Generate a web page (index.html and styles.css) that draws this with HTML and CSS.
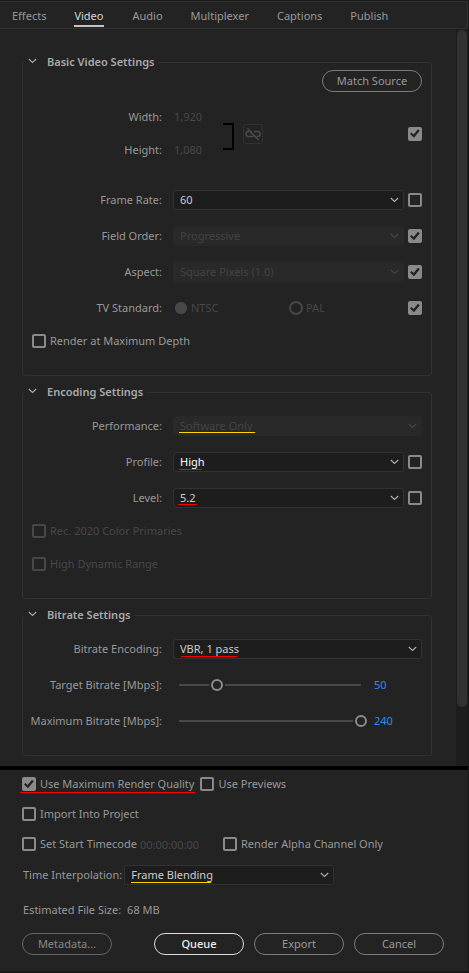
FILE: index.html
```html
<!DOCTYPE html>
<html lang="en">
<head>
<meta charset="utf-8">
<meta name="viewport" content="width=device-width, initial-scale=1">
<title>Export Settings</title>
<link rel="stylesheet" href="styles.css">
</head>
<body>
<svg class="defs" aria-hidden="true">
  <symbol id="chevron" viewBox="0 0 9 6"><path d="M.8 1 4.5 4.5 8.200 1" fill="none" stroke="currentColor" stroke-width="1.100"/></symbol>
</svg>
<main class="dialog">
  <nav class="tabs">
    <a href="#effects">Effects</a>
    <a href="#video" class="active" aria-current="page">Video</a>
    <a href="#audio">Audio</a>
    <a href="#multiplexer">Multiplexer</a>
    <a href="#captions">Captions</a>
    <a href="#publish">Publish</a>
  </nav>

  <div class="viewport">
    <form class="groups">
      <fieldset class="first">
        <legend><button type="button" class="fold" aria-label="Collapse"><svg><use href="#chevron"/></svg></button>Basic Video Settings</legend>
        <div class="actions"><button type="button" class="pill">Match Source</button></div>
        <div class="dims">
          <div class="sizes">
            <label for="w">Width:</label><input class="plain" id="w" type="text" value="1,920" disabled>
            <label for="h">Height:</label><input class="plain" id="h" type="text" value="1,080" disabled>
          </div>
          <span class="bracket"></span>
          <button type="button" class="link" aria-label="Link width and height" disabled>
            <svg viewBox="0 0 18 18"><path d="M5 6.500H4.500a2.500 2.500 0 0 0 0 5H8q1.500 0 2-1M8 6.500q-1.500.5-1.500 2M10 6.500h3.500a2.500 2.500 0 0 1 0 5H13M3.500 3.500l11 11.500" fill="none" stroke="currentColor" stroke-width="1.500"/></svg>
          </button>
          <input type="checkbox" aria-label="Match size" checked>
        </div>
        <div class="row">
          <label for="rate">Frame Rate:</label>
          <div class="select"><select id="rate"><option>60</option></select><svg><use href="#chevron"/></svg></div>
          <input type="checkbox" aria-label="Match frame rate">
        </div>
        <div class="row">
          <label for="order">Field Order:</label>
          <div class="select"><select id="order" disabled><option>Progressive</option></select><svg><use href="#chevron"/></svg></div>
          <input type="checkbox" aria-label="Match field order" checked>
        </div>
        <div class="row">
          <label for="aspect">Aspect:</label>
          <div class="select"><select id="aspect" disabled><option>Square Pixels (1.0)</option></select><svg><use href="#chevron"/></svg></div>
          <input type="checkbox" aria-label="Match aspect" checked>
        </div>
        <div class="row">
          <span class="label">TV Standard:</span>
          <div class="radios">
            <label><input type="radio" name="tv" checked disabled>NTSC</label>
            <label><input type="radio" name="tv" disabled>PAL</label>
          </div>
          <input type="checkbox" aria-label="Match TV standard" checked>
        </div>
        <label class="check"><input type="checkbox">Render at Maximum Depth</label>
      </fieldset>

      <fieldset>
        <legend><button type="button" class="fold" aria-label="Collapse"><svg><use href="#chevron"/></svg></button>Encoding Settings</legend>
        <div class="row wide">
          <label for="perf">Performance:</label>
          <div class="select"><select id="perf" disabled><option>Software Only</option></select><svg><use href="#chevron"/></svg><i class="mark yellow software"></i></div>
        </div>
        <div class="row">
          <label for="profile">Profile:</label>
          <div class="select"><select id="profile" class="bright"><option>High</option></select><svg><use href="#chevron"/></svg><i class="mark profile"></i></div>
          <input type="checkbox" aria-label="Match profile">
        </div>
        <div class="row">
          <label for="level">Level:</label>
          <div class="select"><select id="level"><option>5.2</option></select><svg><use href="#chevron"/></svg><i class="mark level"></i></div>
          <input type="checkbox" aria-label="Match level">
        </div>
        <label class="check off"><input type="checkbox" disabled>Rec. 2020 Color Primaries</label>
        <label class="check off"><input type="checkbox" disabled>High Dynamic Range</label>
      </fieldset>

      <fieldset>
        <legend><button type="button" class="fold" aria-label="Collapse"><svg><use href="#chevron"/></svg></button>Bitrate Settings</legend>
        <div class="row wide">
          <label for="enc">Bitrate Encoding:</label>
          <div class="select"><select id="enc"><option>VBR, 1 pass</option></select><svg><use href="#chevron"/></svg><i class="mark encoding"></i></div>
        </div>
        <div class="row wide">
          <label for="target">Target Bitrate [Mbps]:</label>
          <div class="slider"><input id="target" type="range" min="0" max="240" value="50"><output for="target">50</output></div>
        </div>
        <div class="row wide">
          <label for="max">Maximum Bitrate [Mbps]:</label>
          <div class="slider"><input id="max" type="range" min="0" max="240" value="240"><output for="max">240</output></div>
        </div>
      </fieldset>
    </form>
    <div class="scrollbar"><div class="thumb"></div></div>
  </div>

  <form class="footer">
    <div class="line">
      <label class="check quality"><input type="checkbox" checked>Use Maximum Render Quality<i class="mark"></i></label>
      <label class="check"><input type="checkbox">Use Previews</label>
    </div>
    <div class="line">
      <label class="check"><input type="checkbox">Import Into Project</label>
    </div>
    <div class="line">
      <div class="timecode">
        <label class="check"><input type="checkbox">Set Start Timecode</label>
        <input class="plain" type="text" value="00:00:00:00" aria-label="Start timecode" disabled>
      </div>
      <label class="check"><input type="checkbox">Render Alpha Channel Only</label>
    </div>
    <div class="line interpolation">
      <label for="interp">Time Interpolation:</label>
      <div class="select"><select id="interp"><option>Frame Blending</option></select><svg><use href="#chevron"/></svg><i class="mark yellow blending"></i></div>
    </div>
    <div class="line size"><span>Estimated File Size:</span><span>68 MB</span></div>
    <div class="buttons">
      <button type="button" class="pill dim">Metadata...</button>
      <button type="button" class="pill primary">Queue</button>
      <button type="button" class="pill">Export</button>
      <button type="button" class="pill">Cancel</button>
    </div>
  </form>
</main>
</body>
</html>
```
FILE: styles.css
```css
* { box-sizing: border-box; }

body {
  margin: 0;
  padding: 1px 1px 1px 0;
  background: #191919;
  color: #999;
  font: 11px/16px "Noto Sans", "Open Sans", sans-serif;
}

button, input, select { font: inherit; color: inherit; margin: 0; padding: 0; }
label, .label, legend { white-space: nowrap; }
.defs { display: none; }
.dialog { background: #232323; }

.tabs {
  display: flex;
  gap: 28px;
  height: 28px;
  padding-left: 12px;
  border: 1px solid #323232;
  border-left: 0;
  border-radius: 0 3px 3px 0;
}
.tabs a {
  height: 25px;
  padding-top: 6px;
  color: inherit;
  text-decoration: none;
}
.tabs .active { padding-right: 1px; color: #d6d6d6; border-bottom: 2px solid #c4c4c4; }

.viewport {
  display: flex;
  border-bottom: 4px solid #000;
}
.groups {
  flex: 1;
  display: flex;
  flex-direction: column;
  gap: 8px;
  min-width: 0;
  padding: 25px 24px 10px 22px;
}
.scrollbar { width: 12px; padding: 1px 1px 0; background: #1d1d1d; }
.thumb { height: 92%; border-radius: 5px; background: #323232; }

fieldset {
  display: flex;
  flex-direction: column;
  gap: 16px;
  min-width: 0;
  margin: 0;
  padding: 16px 9px 24px;
  border: 1px solid #323232;
  border-radius: 3px;
}
.first { padding-top: 0; }
legend {
  display: flex;
  align-items: center;
  height: 16px;
  margin-left: -8px;
  padding: 0 4px 0 0;
  color: #aaa;
  font-weight: 600;
}
.fold {
  display: flex;
  width: 23px;
  height: 16px;
  padding: 4px 0 0 4px;
  border: 0;
  background: none;
}
.fold svg { width: 9px; height: 6px; }

.actions { display: flex; justify-content: flex-end; margin-bottom: -1px; }
.pill {
  min-width: 100px;
  height: 22px;
  border: 1px solid #7c7c7c;
  border-radius: 11px;
  background: none;
  color: #999;
}

.dims { display: flex; align-items: center; margin-bottom: 14px; }
.sizes {
  display: grid;
  grid-template-columns: 130px 40px;
  gap: 13px 11px;
  line-height: 20px;
}
.sizes label { text-align: right; }
.plain { width: 40px; height: 20px; border: 0; background: none; color: #484848; padding-left: 1px; }
.bracket {
  align-self: flex-end;
  width: 11px;
  height: 27px;
  margin: 0 0 10px 10px;
  border: 2px solid #000;
  border-left: 0;
}
.link {
  width: 20px;
  height: 20px;
  margin: 0 auto 0 9px;
  border: 1px solid #323232;
  border-radius: 3px;
  background: none;
  color: #4b4b4b;
}
.link svg { display: block; width: 18px; height: 18px; }

.row {
  display: grid;
  grid-template-columns: 130px 1fr 14px;
  align-items: center;
  height: 20px;
}
.row > :nth-child(2) { margin: 0 4px 0 11px; }
.row.wide { grid-template-columns: 130px 1fr; }
.row.wide > :nth-child(2) { margin-right: 0; }
.row > label, .row > .label { justify-self: end; }

.select { position: relative; }
.select select {
  display: block;
  width: 100%;
  height: 20px;
  padding: 0 24px 0 6px;
  appearance: none;
  border: 1px solid #323232;
  border-radius: 3px;
  background: #1d1d1d;
  color: #ccc;
  opacity: 1;
}
.select select:disabled { border-color: #292929; background: #292929; color: #444; }
.select .bright { color: #fff; }
.select svg {
  position: absolute;
  top: 7px;
  right: 5px;
  width: 9px;
  height: 6px;
  color: #b0b0b0;
  pointer-events: none;
}
.select select:disabled + svg { color: #484848; }

.mark { position: absolute; height: 1px; background: #f00; pointer-events: none; }
.yellow { background: #ffd400; }
.software { left: 6px; top: 16px; width: 76px; }
.profile { left: 6px; top: 17px; width: 23px; }
.level { left: 5px; top: 16px; width: 19px; }
.encoding { left: 8px; top: 17px; width: 56px; }
.blending { left: 7px; top: 17px; width: 80px; }
.quality .mark { left: -2px; right: -1px; top: 18px; }

input[type="checkbox"] {
  flex: none;
  width: 14px;
  height: 14px;
  appearance: none;
  border: 2px solid #8a8a8a;
  border-radius: 2px;
}
input[type="checkbox"]:checked { background: #8a8a8a; }
input[type="checkbox"]:checked::before {
  content: "";
  display: block;
  width: 10px;
  height: 10px;
  background: #232323;
  clip-path: polygon(0 55%, 15% 40%, 36% 61%, 80% 8%, 98% 22%, 40% 92%);
}
input[type="checkbox"]:disabled { border-color: #484848; }

.check { display: flex; align-items: center; gap: 4px; height: 20px; position: relative; }
fieldset .check { margin-top: -3px; }
.off { color: #484848; }

.radios { display: grid; grid-template-columns: 115px 1fr; color: #484848; }
.radios label { display: flex; align-items: center; gap: 3px; }
input[type="radio"] {
  width: 14px;
  height: 14px;
  margin-left: 1px;
  appearance: none;
  border: 2px solid #484848;
  border-radius: 50%;
}
input[type="radio"]:checked { background: #484848; clip-path: circle(6px); }

.slider { display: grid; grid-template-columns: 1fr 48px; gap: 7px; align-items: center; }
input[type="range"] {
  width: 100%;
  height: 20px;
  appearance: none;
  background: linear-gradient(#484848, #484848) center / calc(100% - 12px) 2px no-repeat;
}
input[type="range"]::-webkit-slider-thumb {
  appearance: none;
  width: 12px;
  height: 12px;
  border: 2px solid #8c8c8c;
  border-radius: 50%;
  background: #232323;
  box-shadow: 0 0 0 2px #232323;
}
output { color: #2d8ceb; }

.footer { padding: 4px 24px 16px 22px; }
.line { display: flex; align-items: center; height: 20px; margin-bottom: 10px; }
.quality { margin-right: 6px; }
.timecode { display: flex; gap: 2px; width: 201px; }
.timecode .plain { width: 72px; }
.interpolation { gap: 2px; margin: 11px 0 15px 1px; }
.interpolation .select { width: 210px; }
.size { gap: 6px; margin: 0 0 13px 1px; }
.buttons { display: flex; gap: 10px; }
.buttons .pill { min-width: 90px; }
.buttons .dim { margin-right: auto; border-color: #666; color: #888; }
.buttons .primary { border-color: #ddd; color: #eee; font-weight: 500; }
```
